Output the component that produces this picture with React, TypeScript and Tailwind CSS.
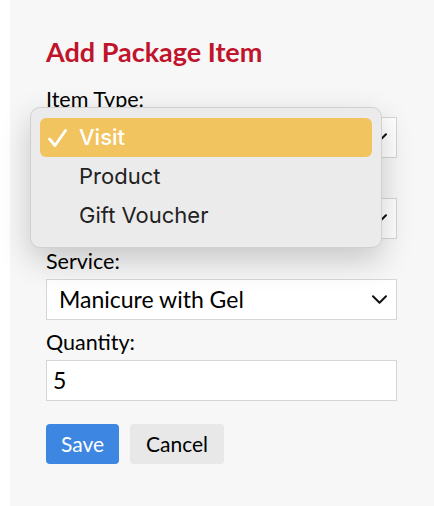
import React from "react";

const Chevron = () => (
  <svg width="15" height="9" viewBox="0 0 15 9" fill="none" className="shrink-0">
    <path d="M1 1.2 L7.5 7.7 L14 1.2" stroke="#111" strokeWidth="2" strokeLinecap="round" strokeLinejoin="round" />
  </svg>
);

function Field({ label, children, first }: { label: string; children: React.ReactNode; first?: boolean }) {
  return (
    <div className={first ? "flex flex-col" : "flex flex-col pt-[10px]"}>
      <label className="text-[21.5px] leading-[24px] text-black">{label}</label>
      <div className="mt-[6px]">{children}</div>
    </div>
  );
}

function SelectBox({ value }: { value: string }) {
  return (
    <div className="flex h-[41px] items-center justify-between border border-[#d6d6d6] bg-white pl-[12px] pr-[9px]">
      <span className="text-[23px] text-black">{value}</span>
      <Chevron />
    </div>
  );
}

export default function App() {
  return (
    <div className="flex min-h-[506px] bg-white" style={{ fontFamily: "Lato, 'Liberation Sans', sans-serif" }}>
      <div className="ml-[10px] flex-1 bg-[#f7f7f7]">
        <div className="relative w-[387px] pl-[36px] pt-[36px]">
          <h1 className="text-[27px] font-bold leading-[32px] text-[#c0142c]">Add Package Item</h1>
          <div className="mt-[19px]">
            <Field label="Item Type:" first>
              <SelectBox value="Visit" />
            </Field>
            <Field label="Location:">
              <SelectBox value="Main Salon" />
            </Field>
            <Field label="Service:">
              <SelectBox value="Manicure with Gel" />
            </Field>
            <Field label="Quantity:">
              <div className="flex h-[41px] items-center border border-[#d6d6d6] bg-white pl-[6px]">
                <span className="text-[23px] text-black">5</span>
              </div>
            </Field>
            <div className="mt-[23px] flex gap-[11px]">
              <button className="h-[40px] w-[73px] rounded-[4px] bg-[#3d86e1] text-[21px] text-white">Save</button>
              <button className="h-[40px] w-[94px] rounded-[4px] bg-[#e8e8e8] text-[21px] text-black">Cancel</button>
            </div>
          </div>

          <div
            className="absolute left-[20px] top-[107px] w-[352px] rounded-[10px] border border-[#d0d0d0] bg-[#ebebeb] px-[9px] pb-[12px] pt-[10px] shadow-[0_12px_32px_rgba(0,0,0,0.2)]"
            style={{ fontFamily: "Inter, 'Noto Sans', sans-serif" }}
          >
            <div className="flex h-[39px] items-center rounded-[6px] bg-[#f2c45f] text-white">
              <span className="w-[39px] pl-[7px]">
                <svg width="21" height="20" viewBox="0 0 21 20" fill="none">
                  <path d="M2.5 11 L8 17.5 L18.5 2.5" stroke="#fff" strokeWidth="2.8" strokeLinecap="round" strokeLinejoin="round" />
                </svg>
              </span>
              <span className="text-[22px] font-medium">Visit</span>
            </div>
            <div className="flex h-[39px] items-center pl-[39px] text-[22px] text-[#222]">Product</div>
            <div className="flex h-[39px] items-center pl-[39px] text-[22px] text-[#222]">Gift Voucher</div>
          </div>
        </div>
      </div>
    </div>
  );
}
